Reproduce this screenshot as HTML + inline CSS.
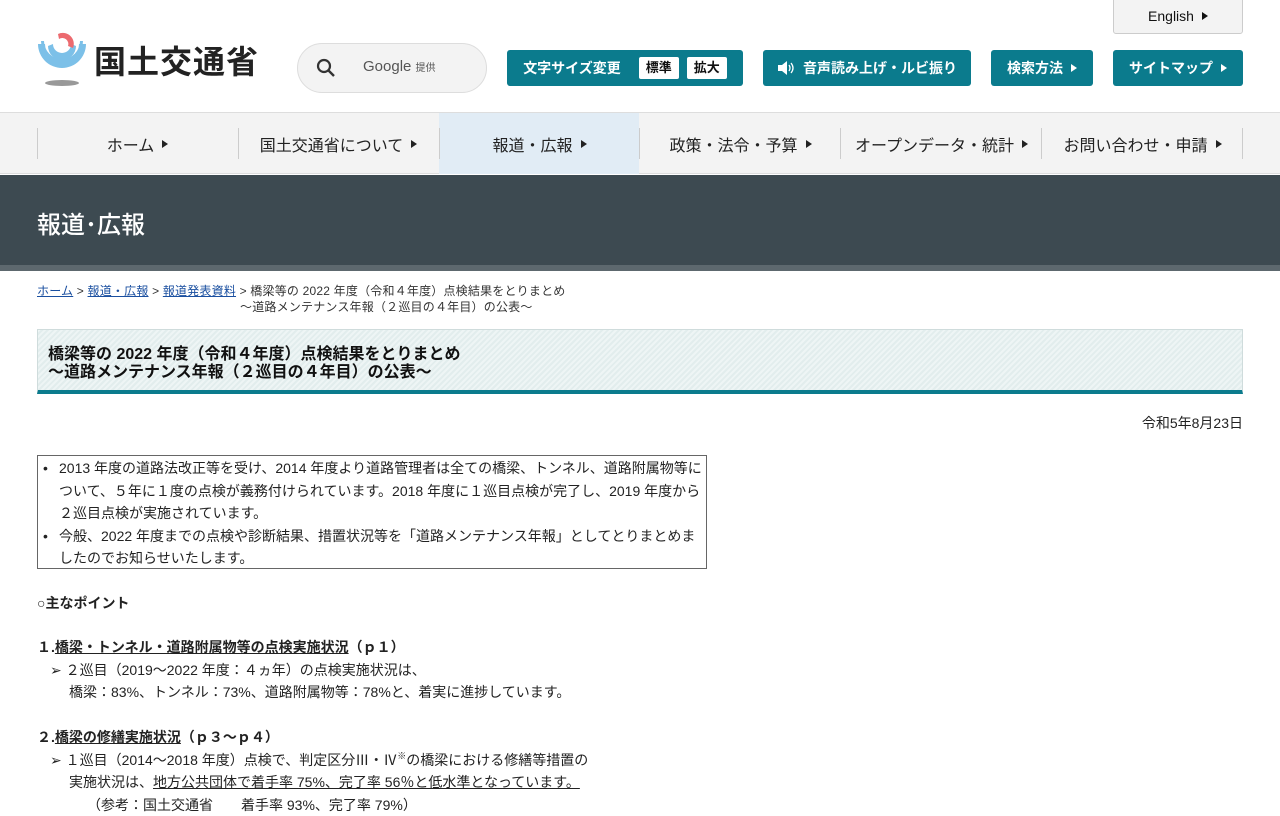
<!DOCTYPE html>
<html lang="ja"><head><meta charset="utf-8">
<style>
*{margin:0;padding:0;box-sizing:border-box}
body{width:1280px;height:800px;overflow:hidden;background:#fff;font-family:"Liberation Sans","Noto Sans CJK JP",sans-serif;color:#222;position:relative}
.abs{position:absolute}
.btn{position:absolute;top:50px;height:36px;background:#0b7b8d;color:#fff;border-radius:3px;font-size:14px;font-weight:bold;display:flex;align-items:center;justify-content:center;white-space:nowrap}
.tri{display:inline-block;width:0;height:0;border-left:6px solid currentColor;border-top:4.5px solid transparent;border-bottom:4.5px solid transparent;margin-left:8px}
.wbox{background:#fff;color:#111;border-radius:2px;padding:0 7px;height:22px;line-height:22px;margin-left:8px;font-size:13px}
.nav{position:absolute;top:112px;left:0;width:1280px;height:62px;background:#f3f3f3;border-top:1px solid #ddd;border-bottom:1px solid #ddd}
.ni{position:absolute;top:0;height:61px;width:201px;display:flex;align-items:center;justify-content:center;font-size:16px;color:#222}
.sep{position:absolute;top:15px;width:1px;height:31px;background:#ccc}
.txt{font-size:14px;line-height:22.5px;color:#222}
u{text-decoration:underline}
sup{line-height:0;font-size:9px;vertical-align:6px}
</style></head><body>

<div class="abs" style="left:1113px;top:-2px;width:130px;height:36px;background:#f3f3f3;border:1px solid #ccc;border-radius:0 0 3px 3px;font-size:14px;display:flex;align-items:center;justify-content:center;color:#111">English<span class="tri"></span></div>

<svg class="abs" style="left:36px;top:32px" width="52" height="56" viewBox="0 0 52 56">
<path d="M2 12 A24 24 0 0 0 50 12 L43 12 A17 17 0 0 1 9 12 Z" fill="#7cc0e8"/>
<path d="M5 9 A21 21 0 0 0 47 9 L44 9 A18 18 0 0 1 8 9 Z" fill="#7cc0e8"/>
<path d="M12 14 A14 14 0 0 0 40 14 L35 12 A9 9 0 0 1 17 12 Z" fill="#7cc0e8"/>
<path d="M22 2 A11 11 0 0 1 37 16 L32 14 A6 6 0 0 0 23 7 Z" fill="#ec6a6f"/>
<ellipse cx="26" cy="51" rx="17" ry="3" fill="#999"/>
</svg>
<div class="abs" style="left:94px;top:37px;font-size:32px;font-weight:bold;color:#222;letter-spacing:1px">国土交通省</div>

<div class="abs" style="left:297px;top:43px;width:190px;height:50px;background:#f3f3f3;border:1px solid #ddd;border-radius:25px">
<svg class="abs" style="left:18px;top:14px" width="20" height="20" viewBox="0 0 20 20"><circle cx="8" cy="8" r="6" fill="none" stroke="#333" stroke-width="2.2"/><line x1="12.5" y1="12.5" x2="18" y2="18" stroke="#333" stroke-width="2.4"/></svg>
<div class="abs" style="left:65px;top:14px;font-size:15px;color:#555">Google <span style="font-size:10px">提供</span></div>
</div>

<div class="btn" style="left:507px;width:236px">文字サイズ変更<span class="wbox" style="margin-left:18px">標準</span><span class="wbox">拡大</span></div>
<div class="btn" style="left:763px;width:208px"><svg width="18" height="16" viewBox="0 0 18 16" style="margin-right:8px"><path d="M1 5h4l5-4v14l-5-4H1z" fill="#fff"/><path d="M12 5q2 3 0 6M14 3q4 5 0 10" stroke="#fff" fill="none" stroke-width="1.3"/></svg>音声読み上げ・ルビ振り</div>
<div class="btn" style="left:991px;width:102px">検索方法<span class="tri"></span></div>
<div class="btn" style="left:1113px;width:130px">サイトマップ<span class="tri"></span></div>

<div class="nav">
<div class="ni" style="left:439px;background:#e1ecf5;width:200px"></div>
<div class="sep" style="left:37px"></div><div class="sep" style="left:238px"></div><div class="sep" style="left:439px"></div><div class="sep" style="left:639px"></div><div class="sep" style="left:840px"></div><div class="sep" style="left:1041px"></div><div class="sep" style="left:1242px"></div>
<div class="ni" style="left:37px">ホーム<span class="tri"></span></div>
<div class="ni" style="left:238px">国土交通省について<span class="tri"></span></div>
<div class="ni" style="left:439px">報道・広報<span class="tri"></span></div>
<div class="ni" style="left:640px">政策・法令・予算<span class="tri"></span></div>
<div class="ni" style="left:841px">オープンデータ・統計<span class="tri"></span></div>
<div class="ni" style="left:1042px">お問い合わせ・申請<span class="tri"></span></div>
</div>

<div class="abs" style="left:0;top:175px;width:1280px;height:90px;background:#3d4a51"></div>
<div class="abs" style="left:0;top:265px;width:1280px;height:6px;background:#5d686e"></div>
<div class="abs" style="left:37px;top:205px;font-size:24px;color:#fff;font-weight:500">報道･広報</div>

<div class="abs" style="left:37px;top:283px;font-size:12px;line-height:16px;color:#333;letter-spacing:0.2px">
<u style="color:#1a4fa0">ホーム</u> &gt; <u style="color:#1a4fa0">報道・広報</u> &gt; <u style="color:#1a4fa0">報道発表資料</u> &gt; 橋梁等の 2022 年度（令和４年度）点検結果をとりまとめ</div>
<div class="abs" style="left:240px;top:299px;font-size:12px;line-height:16px;color:#333;letter-spacing:0.2px">～道路メンテナンス年報（２巡目の４年目）の公表～</div>

<div class="abs" style="left:37px;top:329px;width:1206px;height:65px;border:1px solid #cfdcdc;border-bottom:4px solid #0b7b8d;background:repeating-linear-gradient(135deg,#eef5f5 0,#eef5f5 2px,#e2eded 2px,#e2eded 4px)">
<div style="position:absolute;left:10px;top:16px;font-size:16px;font-weight:bold;line-height:18px;color:#111">橋梁等の 2022 年度（令和４年度）点検結果をとりまとめ<br>～道路メンテナンス年報（２巡目の４年目）の公表～</div>
</div>

<div class="abs txt" style="right:37px;top:412px">令和5年8月23日</div>

<div class="abs txt" style="left:37px;top:455px;width:670px;height:114px;border:1px solid #666;padding:1px 0 0 0">
<div style="position:relative;padding-left:21px">
<span style="position:absolute;left:5px">•</span>2013 年度の道路法改正等を受け、2014 年度より道路管理者は全ての橋梁、トンネル、道路附属物等に<br>ついて、５年に１度の点検が義務付けられています。2018 年度に１巡目点検が完了し、2019 年度から<br>２巡目点検が実施されています。</div>
<div style="position:relative;padding-left:21px">
<span style="position:absolute;left:5px">•</span>今般、2022 年度までの点検や診断結果、措置状況等を「道路メンテナンス年報」としてとりまとめま<br>したのでお知らせいたします。</div>
</div>

<div class="abs txt" style="left:37px;top:592px;font-weight:bold">○主なポイント</div>

<div class="abs txt" style="left:37px;top:636px">
<div style="font-weight:bold">１.<u>橋梁・トンネル・道路附属物等の点検実施状況</u>（ｐ１）</div>
<div style="padding-left:13px">➢ ２巡目（2019～2022 年度：４ヵ年）の点検実施状況は、</div>
<div style="padding-left:32px">橋梁：83%、トンネル：73%、道路附属物等：78%と、着実に進捗しています。</div>
<div>&nbsp;</div>
<div style="font-weight:bold">２.<u>橋梁の修繕実施状況</u>（ｐ３～ｐ４）</div>
<div style="padding-left:13px">➢ １巡目（2014～2018 年度）点検で、判定区分Ⅲ・Ⅳ<sup>※</sup>の橋梁における修繕等措置の</div>
<div style="padding-left:32px">実施状況は、<u>地方公共団体で着手率 75%、完了率 56％と低水準となっています。</u></div>
<div style="padding-left:50px">（参考：国土交通省　　着手率 93%、完了率 79%）</div>
</div>
</body></html>
